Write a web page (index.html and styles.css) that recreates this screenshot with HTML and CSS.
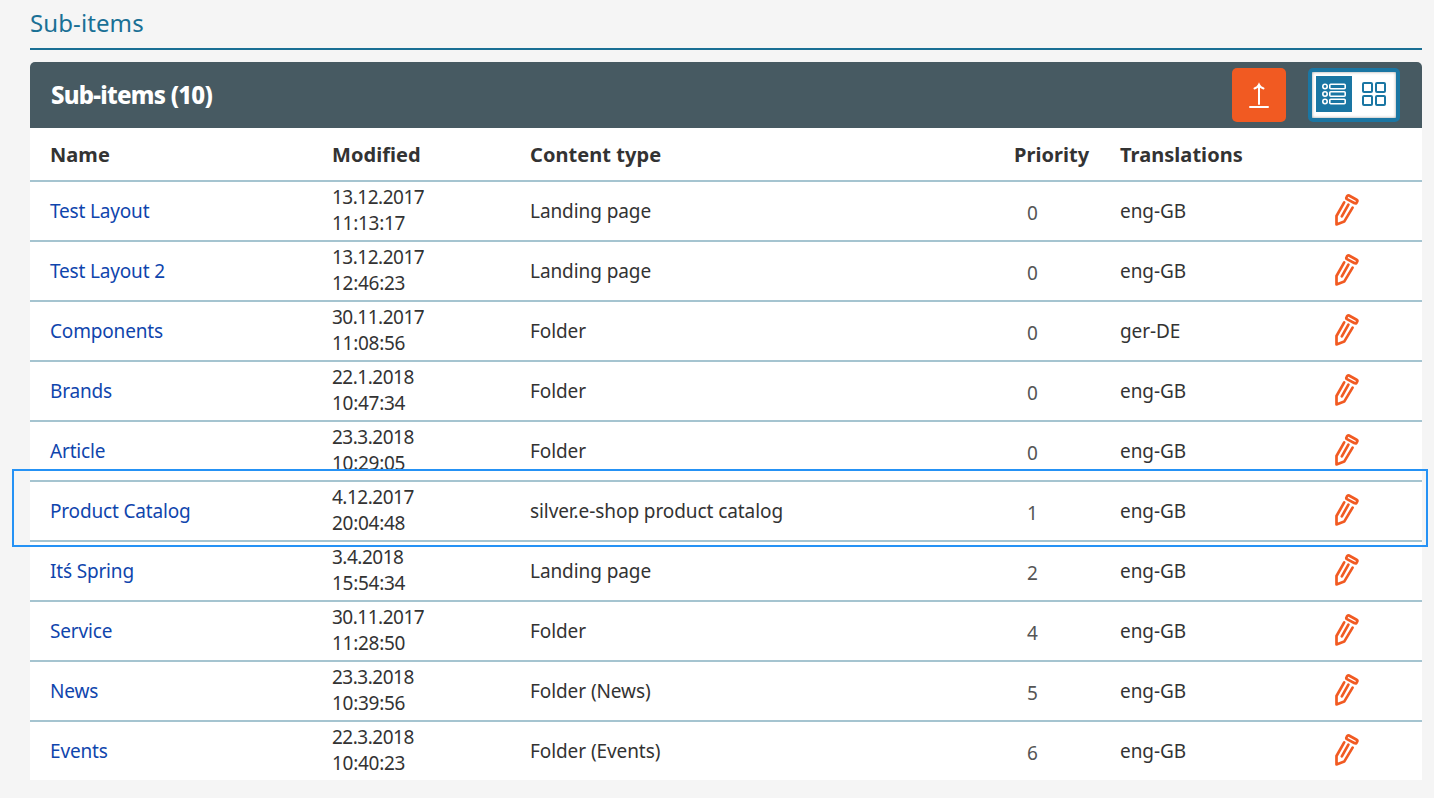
FILE: index.html
```html
<!DOCTYPE html>
<html lang="en">
<head>
<meta charset="utf-8">
<title>Sub-items</title>
<link rel="stylesheet" href="styles.css">
</head>
<body>
<svg class="defs" aria-hidden="true">
  <symbol id="pencil" viewBox="0 0 24 34">
    <g fill="none" stroke="#f15a22" stroke-width="2.7" stroke-linecap="round" stroke-linejoin="round">
      <path d="M9.2 9.4L1.5 23V31.4L9.2 28.6L17.6 14.6"/>
      <path d="M13.4 11.6L6.8 23.4"/>
      <path d="M14 2.5L21.6 6.7Q22.8 7.4 22.2 8.5L21.5 9.8Q20.9 10.9 19.7 10.2L12 6.1Q10.9 5.4 11.5 4.3L12.1 3.1Q12.8 1.9 14 2.5Z"/>
    </g>
  </symbol>
</svg>
<main class="page">
  <h2 class="section-title">Sub-items</h2>
  <section class="panel">
    <header class="panel-head">
      <h3 class="panel-title">Sub-items (10)</h3>
      <button class="upload" aria-label="Upload">
        <svg width="54" height="54" viewBox="0 0 54 54" fill="none" stroke="#fff" stroke-width="2" stroke-linecap="round"><path d="M27 36V17M22.5 20.5Q25.8 19.3 27 16.6Q28.2 19.3 31.5 20.5M18 39H36"/></svg>
      </button>
      <div class="views">
        <span class="view active"><svg width="36" height="36" viewBox="0 0 36 36" fill="none" stroke="#fff" stroke-width="1.6"><circle cx="9" cy="10.5" r="2.2"/><circle cx="9" cy="18" r="2.2"/><circle cx="9" cy="25.5" r="2.2"/><rect x="13.8" y="8.3" width="15.4" height="4.4" rx="1"/><rect x="13.8" y="15.8" width="15.4" height="4.4" rx="1"/><rect x="13.8" y="23.3" width="15.4" height="4.4" rx="1"/></svg></span>
        <span class="view"><svg width="36" height="36" viewBox="0 0 36 36" fill="none" stroke="#1a76a3" stroke-width="2"><rect x="7" y="7" width="9" height="9" rx="1"/><rect x="20" y="7" width="9" height="9" rx="1"/><rect x="7" y="20" width="9" height="9" rx="1"/><rect x="20" y="20" width="9" height="9" rx="1"/></svg></span>
      </div>
    </header>
    <div class="row head"><span>Name</span><span>Modified</span><span>Content type</span><span>Priority</span><span>Translations</span></div>
    <div class="row"><a>Test Layout</a><span class="date">13.12.2017<br>11:13:17</span><span>Landing page</span><span class="prio">0</span><span>eng-GB</span><svg class="edit"><use href="#pencil"/></svg></div>
    <div class="row"><a>Test Layout 2</a><span class="date">13.12.2017<br>12:46:23</span><span>Landing page</span><span class="prio">0</span><span>eng-GB</span><svg class="edit"><use href="#pencil"/></svg></div>
    <div class="row"><a>Components</a><span class="date">30.11.2017<br>11:08:56</span><span>Folder</span><span class="prio">0</span><span>ger-DE</span><svg class="edit"><use href="#pencil"/></svg></div>
    <div class="row"><a>Brands</a><span class="date">22.1.2018<br>10:47:34</span><span>Folder</span><span class="prio">0</span><span>eng-GB</span><svg class="edit"><use href="#pencil"/></svg></div>
    <div class="row"><a>Article</a><span class="date">23.3.2018<br>10:29:05</span><span>Folder</span><span class="prio">0</span><span>eng-GB</span><svg class="edit"><use href="#pencil"/></svg></div>
    <div class="row marked"><a>Product Catalog</a><span class="date">4.12.2017<br>20:04:48</span><span>silver.e-shop product catalog</span><span class="prio">1</span><span>eng-GB</span><svg class="edit"><use href="#pencil"/></svg></div>
    <div class="row"><a>Itś Spring</a><span class="date">3.4.2018<br>15:54:34</span><span>Landing page</span><span class="prio">2</span><span>eng-GB</span><svg class="edit"><use href="#pencil"/></svg></div>
    <div class="row"><a>Service</a><span class="date">30.11.2017<br>11:28:50</span><span>Folder</span><span class="prio">4</span><span>eng-GB</span><svg class="edit"><use href="#pencil"/></svg></div>
    <div class="row"><a>News</a><span class="date">23.3.2018<br>10:39:56</span><span>Folder (News)</span><span class="prio">5</span><span>eng-GB</span><svg class="edit"><use href="#pencil"/></svg></div>
    <div class="row"><a>Events</a><span class="date">22.3.2018<br>10:40:23</span><span>Folder (Events)</span><span class="prio">6</span><span>eng-GB</span><svg class="edit"><use href="#pencil"/></svg></div>
  </section>
</main>
</body>
</html>
```
FILE: styles.css
```css
* { box-sizing: border-box; }
body { margin: 0; background: #f5f5f5; color: #333; font: 19px/26px "Noto Sans", sans-serif; }
.defs { display: none; }
.page { height: 798px; padding: 0 12px 0 30px; overflow: hidden; }
.section-title { height: 50px; margin: 0 0 12px; padding-top: 7px; border-bottom: 2px solid #1a6f94; color: #1a7095; font-size: 24px; line-height: 32px; font-weight: 400; letter-spacing: 0.1px; }
.panel { background: #fff; border-radius: 5px 5px 0 0; }
.panel-head { display: flex; align-items: center; height: 66px; padding: 0 22px 0 21px; background: #475a62; border-radius: 5px 5px 0 0; }
.panel-title { margin: 0 auto 0 0; color: #fff; font-size: 24px; line-height: 30px; font-weight: 800; letter-spacing: -0.75px; }
.upload { width: 54px; height: 54px; padding: 0; border: 0; border-radius: 5px; background: #f15a22; margin-right: 22px; }
.upload svg { display: block; }
.views { display: flex; gap: 4px; width: 92px; height: 54px; padding: 4px; border: 4px solid #1a76a3; border-radius: 5px; background: #fff; box-shadow: inset 0 0 3px #999; }
.view { width: 36px; height: 36px; }
.view svg { display: block; }
.active { background: #1a76a3; }
.row { position: relative; display: grid; grid-template-columns: 282px 198px 484px 106px 214px 1fr; align-items: center; height: 60px; padding: 0 20px; border-top: 2px solid #a5c4d0; letter-spacing: -0.08px; }
.row.head { height: 52px; padding-top: 2px; border-top: 0; font-size: 20px; font-weight: 700; letter-spacing: 0.05px; }
.row a { color: #0f45ad; letter-spacing: -0.17px; }
.date { padding-bottom: 2px; letter-spacing: -0.28px; }
.date::first-line { letter-spacing: -0.5px; }
.prio { padding: 4px 0 0 13px; color: #555; }
.edit { width: 24px; height: 34px; margin: -2px 0 0 1px; }
.marked::after { content: ""; position: absolute; inset: -13px -6px -7px -18px; border: 2px solid #2592f5; pointer-events: none; z-index: 1; }
```
